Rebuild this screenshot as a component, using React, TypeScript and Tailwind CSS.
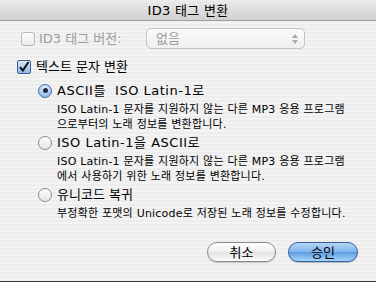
import React from 'react';

const font = { fontFamily: '"Lucida Grande", "DejaVu Sans", "Noto Sans CJK KR", sans-serif' };

function Radio({ checked }: { checked?: boolean }) {
  return (
    <div
      className={`w-[14px] h-[14px] rounded-full border flex items-center justify-center shrink-0 ${
        checked
          ? 'border-[#4a6fa8] bg-[radial-gradient(circle_at_50%_30%,#e4f1ff_0%,#a9cdf2_55%,#6ea3df_100%)]'
          : 'border-[#8a8a8a] bg-[linear-gradient(#fdfdfd,#e6e6e6)]'
      }`}
    >
      {checked && <div className="w-[5px] h-[5px] rounded-full bg-[#1c2a40]" />}
    </div>
  );
}

function Option({
  checked,
  label,
  wide,
  lines,
}: {
  checked?: boolean;
  label: string;
  wide?: boolean;
  lines: string[];
}) {
  return (
    <div className="flex flex-col">
      <div className="flex items-center gap-[5px]">
        <Radio checked={checked} />
        <span
          className={`text-[13px] leading-[16px] text-black whitespace-pre ${
            wide ? 'tracking-[0.5px]' : ''
          }`}
        >
          {label}
        </span>
      </div>
      <div className="pl-[19px] mt-[3px] text-[11px] leading-[15px] tracking-[0.2px] text-black">
        {lines.map((l) => (
          <div key={l}>{l}</div>
        ))}
      </div>
    </div>
  );
}

export default function App() {
  return (
    <div
      style={font}
      className="w-[376px] h-[282px] flex flex-col bg-[repeating-linear-gradient(#ededed_0px,#ededed_2px,#f3f3f3_2px,#f3f3f3_4px)] border-b border-[#3a3a3a]"
    >
      {/* Title bar */}
      <div className="h-[21px] shrink-0 flex items-center justify-center bg-[linear-gradient(#ececec,#d0d0d0)] border-b border-[#a0a0a0]">
        <span className="text-[13px] leading-none tracking-[0.3px] text-black">ID3 태그 변환</span>
      </div>

      {/* ID3 version row */}
      <div className="flex items-center mt-[7px] h-[21px]">
        <div className="flex items-center gap-[4px] pl-[21px] w-[146px]">
          <div className="w-[14px] h-[14px] rounded-[3px] border border-[#b8b8b8] bg-[linear-gradient(#fbfbfb,#ececec)]" />
          <span className="text-[13px] text-[#9c9c9c]">ID3 태그 버전:</span>
        </div>
        <div className="w-[159px] h-[21px] rounded-[5px] border border-[#c4c4c4] bg-[linear-gradient(#fafafa,#f0f0f0)] flex items-center justify-between pl-[9px] pr-[6px]">
          <span className="text-[13px] text-[#9a9a9a]">없음</span>
          <div className="flex flex-col items-center gap-[2px]">
            <div className="w-0 h-0 border-l-[3px] border-r-[3px] border-b-[4px] border-l-transparent border-r-transparent border-b-[#a8a8a8]" />
            <div className="w-0 h-0 border-l-[3px] border-r-[3px] border-t-[4px] border-l-transparent border-r-transparent border-t-[#a8a8a8]" />
          </div>
        </div>
      </div>

      {/* Text conversion */}
      <div className="flex items-center gap-[5px] pl-[17px] mt-[8px]">
        <div className="w-[14px] h-[14px] rounded-[2px] border border-[#3c5e92] bg-[linear-gradient(#d6e8fb,#8ebbe9)] flex items-center justify-center">
          <svg width="12" height="12" viewBox="0 0 12 12">
            <path d="M2 6.2 L4.8 9.5 L10.5 1" fill="none" stroke="#111" strokeWidth="2" />
          </svg>
        </div>
        <span className="text-[13px] text-black">텍스트 문자 변환</span>
      </div>

      <div className="flex flex-col gap-[3px] pl-[38px] mt-[6px]">
        <Option
          checked
          wide
          label="ASCII를  ISO Latin-1로"
          lines={[
            'ISO Latin-1 문자를 지원하지 않는 다른 MP3 응용 프로그램',
            '으로부터의 노래 정보를 변환합니다.',
          ]}
        />
        <Option
          wide
          label="ISO Latin-1을 ASCII로"
          lines={[
            'ISO Latin-1 문자를 지원하지 않는 다른 MP3 응용 프로그램',
            '에서 사용하기 위한 노래 정보를 변환합니다.',
          ]}
        />
        <Option
          label="유니코드 복귀"
          lines={['부정확한 포맷의 Unicode로 저장된 노래 정보를 수정합니다.']}
        />
      </div>

      {/* Buttons */}
      <div className="flex justify-end gap-[12px] pr-[18px] mt-auto mb-[19px]">
        <button className="w-[69px] h-[20px] pt-[1px] rounded-full border border-[#8a8a8a] bg-[linear-gradient(#ffffff,#f0f0f0_50%,#e2e2e2_51%,#fbfbfb)] text-[13px] leading-none text-black shadow-[0_1px_1px_rgba(0,0,0,0.2)]">
          취소
        </button>
        <button className="w-[70px] h-[20px] pt-[1px] rounded-full border border-[#36609c] bg-[linear-gradient(#b5d6f6,#7fb4ec_50%,#5c9ce2_51%,#a6d4fb)] text-[13px] leading-none text-black shadow-[0_1px_1px_rgba(0,0,0,0.25)]">
          승인
        </button>
      </div>
    </div>
  );
}
